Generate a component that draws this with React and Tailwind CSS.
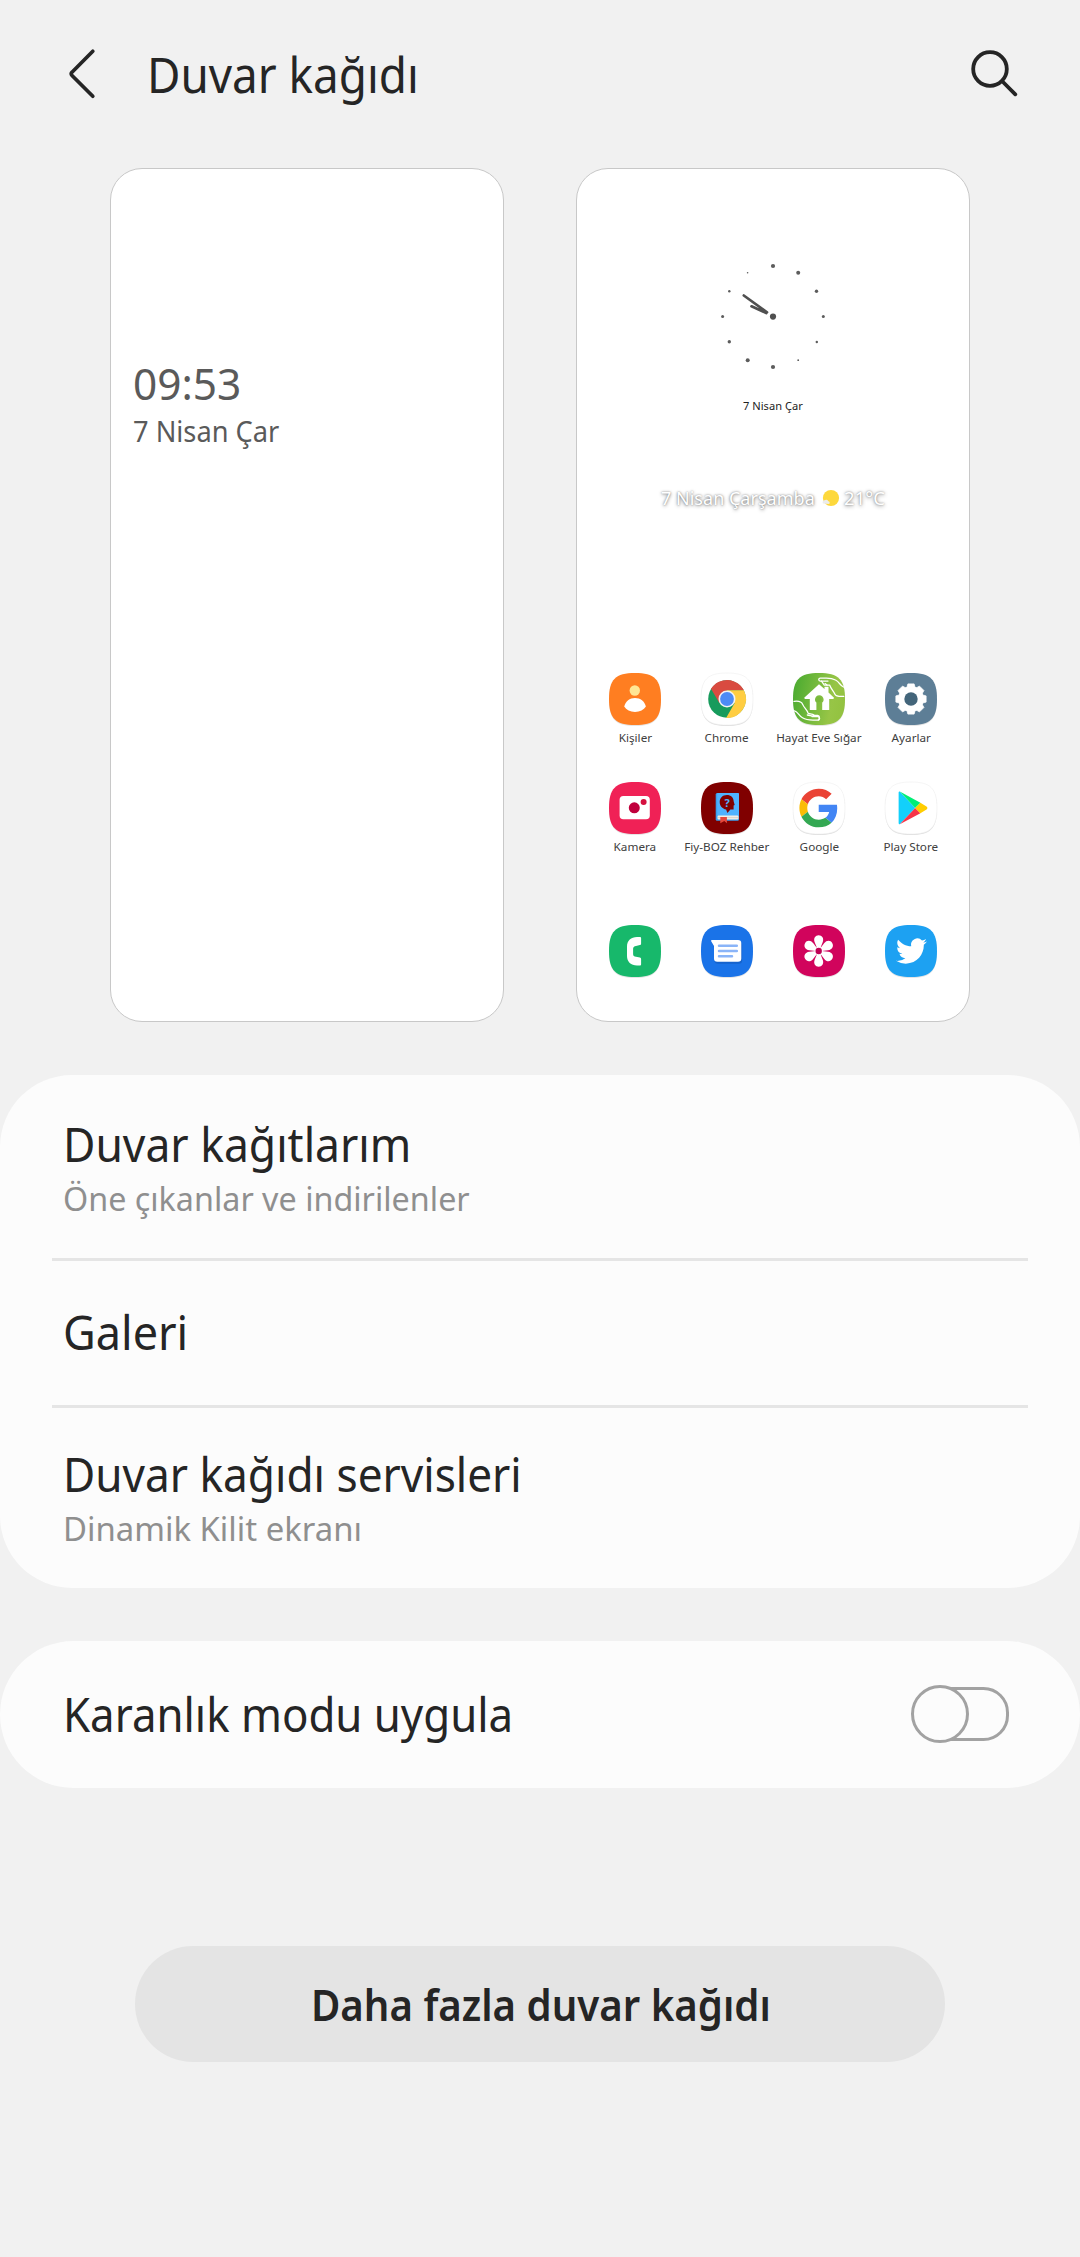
const SQUIRCLE = "M26 0C45.5 0 52 6.5 52 26C52 45.5 45.5 52 26 52C6.5 52 0 45.5 0 26C0 6.5 6.5 0 26 0Z";

function AppIcon({ fill, outlined, children }) {
  return (
    <svg viewBox="0 0 52 52" className="block h-[52px] w-[52px] shrink-0 overflow-visible">
      <path d={SQUIRCLE} fill="#000" opacity={outlined ? 0.13 : 0.1} transform="translate(0 0.9)" />
      <path d={SQUIRCLE} fill={fill} stroke={outlined ? "#efefef" : "none"} strokeWidth="0.6" />
      {children}
    </svg>
  );
}

const Contacts = () => (
  <AppIcon fill="#ff7e21">
    <circle cx="25.8" cy="17.5" r="5.2" fill="#ffe695" />
    <path d="M15.2 33.6C16.6 28.2 20.6 25 26 25s9.600 3.200 10.900 8.600C34.800 37 30.900 39 26 39s-8.700-2-10.800-5.400Z" fill="#fff" />
  </AppIcon>
);

const Chrome = () => (
  <AppIcon fill="#fff" outlined>
    <circle cx="26" cy="26" r="18.8" fill="#179b5c" />
    <path d="M10.030 15.710A19 19 0 0 1 42.900 17.300L26 17.300L18.470 30.350Z" fill="#d94b40" />
    <path d="M42.900 17.300A19 19 0 0 1 25.070 44.980L33.530 30.350L26 17.300Z" fill="#ffcd41" />
    <circle cx="26" cy="26" r="8.500" fill="#f3f3f3" />
    <circle cx="26" cy="26" r="6.900" fill="#4c8bf5" />
  </AppIcon>
);

const StayHome = () => (
  <AppIcon fill="url(#homeGreen)">
    <defs>
      <linearGradient id="homeGreen" x1="0" y1="0.4" x2="1" y2="0.6">
        <stop offset="0" stopColor="#4eac31" />
        <stop offset="0.75" stopColor="#97c546" />
        <stop offset="1" stopColor="#93c240" />
      </linearGradient>
    </defs>
    <path d="M26 11.300L31.500 16v-2.200h4v5.700L41 24.700l-.6 1.400h-4.200V37h-7v-7.500c1-.8 1.400-1.700 1.400-3a4 4 0 0 0-8.600 0c0 1.300.5 2.200 1.400 3V37h-6.600V26.100h-4.900l-.7-1.300Z" fill="#fff" />
    <circle cx="26" cy="26.500" r="2.500" fill="#79b83c" />
    <g fill="none" stroke="#fff" strokeWidth="1.300" strokeLinecap="round" strokeLinejoin="round">
      <path d="M50.500 14c-3.500-1.500-4-5-8-7-3-1.700-6-1.900-9-1.900h-6.200c-2 0-2.100 2.900 0 3h7.700" />
      <path d="M28.500 8.100l2.800 4h5.300c1.700 4.500 4 6 5.200 8.900.7 1.900 4 2.700 9 2.400" />
      <path d="M34 12.100l-2-1.500" />
      <path d="M1 28.400c3.500-.5 7.500.200 8.700 3 1 3.200 4.500 5.200 5.500 9l4.500 1c2 .5 1.500 1.700 0 1.700l-5.400-1.100" />
      <path d="M1.500 37.800c3.500 1 4.500 5 8 7 3.500 2.100 7.500 2.300 10.500 2.300h5c2 0 2.300-3 0-3.600h-6" />
      <path d="M20.500 42.500h4c2.400.5 2.400 3 .8 4.500" />
    </g>
  </AppIcon>
);

const TEETH = [0, 45, 90, 135, 180, 225, 270, 315];

const Settings = () => (
  <AppIcon fill="#5d7e96">
    <circle cx="26" cy="26" r="12.700" fill="#fff" />
    {TEETH.map((a) => (
      <path key={a} d="M21.700 15L22.900 10.900h6.200L30.300 15Z" fill="#fff" stroke="#fff" strokeWidth="0.800" strokeLinejoin="round" transform={`rotate(${a} 26 26)`} />
    ))}
    <circle cx="26" cy="26" r="6.700" fill="#43657a" />
  </AppIcon>
);

const Camera = () => (
  <AppIcon fill="#f02156">
    <rect x="10.600" y="14" width="30.200" height="23.200" rx="3.800" fill="#fff" />
    <circle cx="25.300" cy="25.800" r="5.500" fill="#c0003c" />
    <circle cx="34.600" cy="20" r="3" fill="#d5103f" />
  </AppIcon>
);

const Book = () => (
  <AppIcon fill="#800000">
    <rect x="14.700" y="11" width="23.300" height="27.800" rx="1.500" fill="#3aa0ee" />
    <rect x="16.200" y="11" width="21.800" height="23" rx="1" fill="#4fb2ff" />
    <rect x="16.500" y="33.600" width="21" height="4" rx="1" fill="#f3eee6" />
    <path d="M17 35.600h20.500" stroke="#c9c1b8" strokeWidth="0.600" />
    <path d="M19.300 35h6.600v6.200l-2.600-2.300-4 2.300Z" fill="#e5483c" />
    <path d="M25.800 12.900c4.200 0 6.900 2.700 6.900 6.700l1 3.400-1.100.5v4.100h-3.200l-3 3.500-1.300-3.500c-3.800-.8-6.400-3.700-6.400-7.600 0-4.300 3-7.100 7.100-7.100Z" fill="#800000" />
    <text x="26" y="25.200" textAnchor="middle" fontSize="11" fontWeight="700" fill="#4fb2ff" className="font-['Noto_Sans',sans-serif]">?</text>
  </AppIcon>
);

const Google = () => (
  <AppIcon fill="#fff" outlined>
    <g transform="translate(6.400 6.700) scale(0.805)">
      <path fill="#EA4335" d="M24 9.500c3.540 0 6.710 1.220 9.210 3.600l6.850-6.850C35.900 2.380 30.470 0 24 0 14.620 0 6.510 5.380 2.560 13.220l7.980 6.190C12.430 13.720 17.740 9.500 24 9.500z" />
      <path fill="#4285F4" d="M46.980 24.550c0-1.570-.15-3.090-.38-4.550H24v9.020h12.940c-.58 2.960-2.260 5.480-4.780 7.180l7.730 6c4.510-4.180 7.090-10.360 7.090-17.650z" />
      <path fill="#FBBC05" d="M10.530 28.590c-.48-1.450-.76-2.990-.76-4.590s.27-3.140.76-4.590l-7.980-6.190C.92 16.460 0 20.120 0 24c0 3.880.92 7.540 2.560 10.780l7.970-6.190z" />
      <path fill="#34A853" d="M24 48c6.480 0 11.930-2.130 15.890-5.810l-7.730-6c-2.150 1.450-4.920 2.300-8.160 2.300-6.260 0-11.570-4.220-13.470-9.910l-7.980 6.190C6.510 42.620 14.620 48 24 48z" />
    </g>
  </AppIcon>
);

const Play = () => (
  <AppIcon fill="#fff" outlined>
    <path d="M13.600 10.900c0-.8.500-1.300 1.200-1.300L30.200 26 14.800 42.200c-.7 0-1.200-.5-1.200-1.300Z" fill="#12d0fb" />
    <path d="M14.800 9.600L35.400 20.700 30.200 26Z" fill="#00ee76" />
    <path d="M14.800 42.200L35.400 31.300 30.200 26Z" fill="#f73448" />
    <path d="M35.400 20.700L41.500 24.600c1.200.8 1.200 2 0 2.800L35.400 31.300 30.200 26Z" fill="#ffcd00" />
  </AppIcon>
);

const Phone = () => (
  <AppIcon fill="#17b86b">
    <path d="M28 12h2.800c.8 0 1.300.5 1.300 1.300v5.200c0 .9-.4 1.400-1.200 1.600l-3.900.8c-1.900.3-2.900 1.200-2.900 2.900v5.100c0 1.700 1 2.600 2.900 2.900l3.900.8c.8.200 1.200.7 1.200 1.600v5.100c0 .8-.5 1.300-1.300 1.300H28c-6 0-10-3.700-10-9.500V21.500C18 15.700 22 12 28 12Z" fill="#fff" />
  </AppIcon>
);

const Messages = () => (
  <AppIcon fill="#1a73e8">
    <path d="M10 15h27a3.600 3.600 0 0 1 3.600 3.600V34a3.300 3.300 0 0 1-3.300 3.300H16.500A3.500 3.500 0 0 1 13 33.800V21Z" fill="#0b3f8f" opacity="0.300" transform="translate(0.500 1.500)" />
    <path d="M11 15h26a3.300 3.300 0 0 1 3.300 3.300v15.200a3.300 3.300 0 0 1-3.300 3.300H16.300A3.300 3.300 0 0 1 13 33.500V21l-2.700-4.600c-.5-.8 0-1.400.7-1.400Z" fill="#fff" />
    <path d="M18 20.800h17.800M18 26h17.800M18 31.200h13" stroke="#8ab4f8" strokeWidth="2.500" strokeLinecap="round" />
  </AppIcon>
);

const PETALS = [0, 60, 120, 180, 240, 300];

const Gallery = () => (
  <AppIcon fill="#d1045c">
    {PETALS.map((a) => (
      <path key={a} d="M24.200 23.500L21.800 17.500C20 13.300 22.500 10.300 25.700 10.300S31.400 13.300 29.600 17.500L27.200 23.500Z" fill="#fff" transform={`rotate(${a} 25.700 26)`} />
    ))}
    <circle cx="25.700" cy="26" r="3.900" fill="#fff" />
    <circle cx="25.700" cy="26" r="3.200" fill="#c00055" />
  </AppIcon>
);

const Twitter = () => (
  <AppIcon fill="#1da1f2">
    <path
      transform="translate(11 10.600) scale(1.290)"
      fill="#fff"
      d="M23.953 4.570a10 10 0 01-2.825.775 4.958 4.958 0 002.163-2.723c-.951.555-2.005.959-3.127 1.184a4.920 4.920 0 00-8.384 4.482C7.690 8.095 4.067 6.130 1.640 3.162a4.822 4.822 0 00-.666 2.475c0 1.710.870 3.213 2.188 4.096a4.904 4.904 0 01-2.228-.616v.06a4.923 4.923 0 003.946 4.827 4.996 4.996 0 01-2.212.085 4.936 4.936 0 004.604 3.417 9.867 9.867 0 01-6.102 2.105c-.390 0-.779-.023-1.170-.067a13.995 13.995 0 007.557 2.209c9.053 0 13.998-7.496 13.998-13.985 0-.210 0-.420-.015-.630A9.935 9.935 0 0024 4.590z"
    />
  </AppIcon>
);

const APPS = [
  ["Kişiler", Contacts],
  ["Chrome", Chrome],
  ["Hayat Eve Sığar", StayHome],
  ["Ayarlar", Settings],
  ["Kamera", Camera],
  ["Fiy-BOZ Rehber", Book],
  ["Google", Google],
  ["Play Store", Play],
];

const DOCK = [Phone, Messages, Gallery, Twitter];

/* x, y, radius of the hour marks, starting at twelve */
const MARKS = [
  [53, 5, 2.1], [78.200, 11.800, 2], [96.500, 30.300, 1.700], [103.300, 55.400, 1.500],
  [96.800, 81, 1.200], [78.200, 99.200, 0.900], [53, 106, 2.100], [27.700, 99.300, 2],
  [9.300, 80.800, 1.700], [2.600, 55.500, 1.500], [9.300, 30.300, 1.200], [27.600, 11.700, 0.800],
];

function Clock() {
  return (
    <svg viewBox="0 0 106 110" className="h-[110px] w-[106px]">
      {MARKS.map(([x, y, r]) => (
        <circle key={`${x}-${y}`} cx={x} cy={y} r={r} fill="#5c5c5c" />
      ))}
      <path d="M23.800 34.500L47 51.300M31.500 45.300L46.300 52" stroke="#505050" strokeWidth="2.700" strokeLinecap="round" />
      <circle cx="53" cy="55.600" r="3.100" fill="#505050" />
    </svg>
  );
}

function LockPreview() {
  return (
    <div className="h-[854px] w-[394px] rounded-[32px] border border-[#c8c8c8] bg-white pl-[22px] pt-[186px] text-[#5a5a5a]">
      <div className="h-[57px] origin-left scale-x-[0.985] whitespace-nowrap text-[43px] leading-[58px]">09:53</div>
      <div className="h-[38px] origin-left scale-x-[0.955] whitespace-nowrap text-[28.500px] leading-[38px]">7 Nisan Çar</div>
    </div>
  );
}

function HomePreview() {
  return (
    <div className="flex h-[854px] w-[394px] flex-col items-center rounded-[32px] border border-[#c8c8c8] bg-white">
      <div className="mt-[92px]">
        <Clock />
      </div>
      <div className="mt-[27px] h-4 scale-x-[0.965] text-[11.500px] leading-4 text-[#222]">7 Nisan Çar</div>
      <div className="mt-[70px] flex h-7 items-center whitespace-nowrap text-[18.500px] leading-7 text-white [text-shadow:0_1px_4px_rgba(0,0,0,0.45),0_0_2px_rgba(0,0,0,0.4)]">
        <span className="w-[155px] origin-left scale-x-[0.975]">7 Nisan Çarşamba</span>
        <svg viewBox="0 0 18 18" className="ml-[6px] mr-[4px] h-[18px] w-[18px]">
          <circle cx="9" cy="9" r="8.100" fill="#fdd83c" />
          <path d="M1 14.500a2 2 0 0 1 1.500-3.200 2.300 2.300 0 0 1 3.800 1 1.500 1.500 0 0 1 .8 2.700Z" fill="#ececec" />
        </svg>
        <span>21°C</span>
      </div>
      <div className="mt-[161px] grid grid-cols-[repeat(4,92px)]">
        {APPS.map(([name, Icon]) => (
          <div key={name} className="flex h-[109px] flex-col items-center">
            <Icon />
            <div className="mt-[4.500px] h-4 scale-x-[1.020] whitespace-nowrap text-[11.500px] leading-4 text-[#404040]">{name}</div>
          </div>
        ))}
      </div>
      <div className="mt-[34px] grid grid-cols-[repeat(4,92px)] justify-items-center">
        {DOCK.map((Icon, i) => (
          <Icon key={i} />
        ))}
      </div>
    </div>
  );
}

function Divider() {
  return <div className="mx-[52px] h-[3px] bg-[#e5e5e5]" />;
}

export default function App() {
  return (
    <div className="h-[2257px] w-[1080px] overflow-hidden bg-[#f1f1f1] font-['Noto_Sans',sans-serif] text-[#252525]">
      <header className="flex h-[148px] items-center pl-[64px] pr-[59px]">
        <svg viewBox="0 0 36 54" className="h-[54px] w-[36px]" fill="none" stroke="#252525" strokeWidth="3.700" strokeLinecap="round" strokeLinejoin="round">
          <path d="M28.800 4.200L8 25.200Q6.300 26.800 8 28.500L28.800 49.200" />
        </svg>
        <h1 className="ml-[47px] h-[66px] origin-left scale-x-[0.945] whitespace-nowrap text-[48.500px] leading-[66px]">Duvar kağıdı</h1>
        <svg viewBox="0 0 54 54" className="ml-auto h-[54px] w-[54px]" fill="none" stroke="#252525" strokeWidth="3.800" strokeLinecap="round">
          <circle cx="23" cy="22" r="16.800" />
          <path d="M35.500 34.500L48.300 47.300" />
        </svg>
      </header>

      <section className="mt-[20px] flex h-[854px] gap-[72px] pl-[110px]">
        <LockPreview />
        <HomePreview />
      </section>

      <section className="mt-[53px] h-[513px] rounded-[72px] bg-[#fcfcfc]">
        <div className="h-[183px] pl-[62.500px] pt-[39px]">
          <div className="h-[60px] origin-left scale-x-[0.955] whitespace-nowrap text-[46.500px] leading-[60px]">Duvar kağıtlarım</div>
          <div className="mt-[2px] h-11 origin-left scale-x-[0.964] whitespace-nowrap text-[33.500px] leading-[44px] text-[#8f8f8f]">Öne çıkanlar ve indirilenler</div>
        </div>
        <Divider />
        <div className="flex h-[144px] items-center pb-[2px] pl-[62.500px]">
          <div className="origin-left scale-x-[0.968] text-[46.500px] leading-[60px]">Galeri</div>
        </div>
        <Divider />
        <div className="pl-[62.500px] pt-[36px]">
          <div className="h-[60px] w-[560px] origin-left scale-x-[0.950] whitespace-nowrap text-[46.500px] leading-[60px]">Duvar kağıdı servisleri</div>
          <div className="mt-[2px] h-11 w-[560px] origin-left scale-x-[0.981] whitespace-nowrap text-[33.500px] leading-[44px] text-[#8f8f8f]">Dinamik Kilit ekranı</div>
        </div>
      </section>

      <section className="mt-[53px] flex h-[147px] items-center justify-between rounded-full bg-[#fcfcfc] pb-px pl-[62.500px] pr-[70px]">
        <div className="origin-left scale-x-[0.942] whitespace-nowrap text-[46.500px] leading-[60px]">Karanlık modu uygula</div>
        <svg viewBox="0 0 100 60" className="h-[60px] w-[100px]" fill="#fcfcfc" stroke="#a2a2a2" strokeWidth="3">
          <rect x="4" y="4.500" width="93.500" height="51" rx="24" />
          <circle cx="30" cy="30" r="27.500" />
        </svg>
      </section>

      <button className="mx-auto mt-[158px] flex h-[116px] w-[810px] items-center justify-center rounded-full bg-[#e4e4e4]">
        <span className="ml-[2px] scale-x-[0.913] whitespace-nowrap text-[44px] font-semibold leading-[60px]">Daha fazla duvar kağıdı</span>
      </button>
    </div>
  );
}
